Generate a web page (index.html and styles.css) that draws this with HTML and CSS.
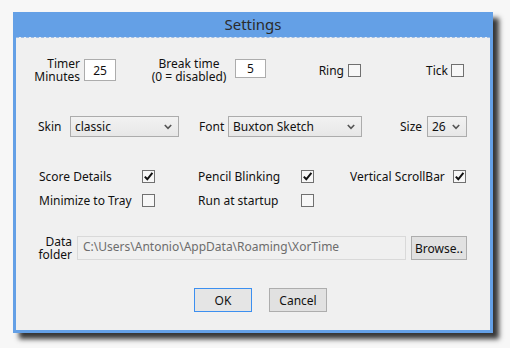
FILE: index.html
```html
<!DOCTYPE html>
<html>
<head>
<meta charset="utf-8">
<link rel="stylesheet" href="styles.css">
</head>
<body>
<div class="window">
  <div class="titlebar">Settings</div>
  <div class="content">
    <div class="row row1">
      <div class="lbl lbl-timer"><div class="ln">Timer</div><div class="ln">Minutes</div></div>
      <div class="field f-timer">25</div>
      <div class="lbl lbl-break"><div class="ln">Break time</div><div class="ln">(0 = disabled)</div></div>
      <div class="field f-break">5</div>
      <div class="lbl lbl-ring">Ring</div>
      <div class="cb cb-ring"></div>
      <div class="lbl lbl-tick">Tick</div>
      <div class="cb cb-tick"></div>
    </div>
    <div class="row row2">
      <div class="lbl lbl-skin">Skin</div>
      <div class="select s-skin"><span>classic</span><svg class="chev" width="8" height="6" viewBox="0 0 8 6"><path d="M0.8 1 L4 4.4 L7.2 1" fill="none" stroke="#555" stroke-width="1.6"/></svg></div>
      <div class="lbl lbl-font">Font</div>
      <div class="select s-font"><span>Buxton Sketch</span><svg class="chev" width="8" height="6" viewBox="0 0 8 6"><path d="M0.8 1 L4 4.4 L7.2 1" fill="none" stroke="#555" stroke-width="1.6"/></svg></div>
      <div class="lbl lbl-size">Size</div>
      <div class="select s-size"><span>26</span><svg class="chev" width="8" height="6" viewBox="0 0 8 6"><path d="M0.8 1 L4 4.4 L7.2 1" fill="none" stroke="#555" stroke-width="1.6"/></svg></div>
    </div>
    <div class="row row3">
      <div class="lbl opt opt1">Score Details</div>
      <div class="cb"><svg width="11" height="11" viewBox="0 0 11 11"><path d="M1.8 5.6 L4.3 8.3 L9.4 1.8" fill="none" stroke="#111" stroke-width="2"/></svg></div>
      <div class="lbl opt opt2">Pencil Blinking</div>
      <div class="cb"><svg width="11" height="11" viewBox="0 0 11 11"><path d="M1.8 5.6 L4.3 8.3 L9.4 1.8" fill="none" stroke="#111" stroke-width="2"/></svg></div>
      <div class="lbl opt opt3">Vertical ScrollBar</div>
      <div class="cb"><svg width="11" height="11" viewBox="0 0 11 11"><path d="M1.8 5.6 L4.3 8.3 L9.4 1.8" fill="none" stroke="#111" stroke-width="2"/></svg></div>
    </div>
    <div class="row row4">
      <div class="lbl opt opt1">Minimize to Tray</div>
      <div class="cb"></div>
      <div class="lbl opt opt2">Run at startup</div>
      <div class="cb"></div>
    </div>
    <div class="row row5">
      <div class="lbl lbl-data"><div class="ln">Data</div><div class="ln">folder</div></div>
      <div class="path">C:\Users\Antonio\AppData\Roaming\XorTime</div>
      <div class="btn btn-browse">Browse..</div>
    </div>
    <div class="row row6">
      <div class="btn btn-ok">OK</div>
      <div class="btn btn-cancel">Cancel</div>
    </div>
  </div>
</div>
</body>
</html>
```
FILE: styles.css
```css
html, body {
  margin: 0;
  padding: 0;
  background: #f7f7f7;
  width: 510px;
  height: 348px;
  overflow: hidden;
}
body {
  font-family: "Noto Sans", "DejaVu Sans", sans-serif;
  font-size: 12px;
  color: #111;
}
.window {
  margin-left: 13px;
  margin-top: 12px;
  width: 480px;
  height: 321px;
  box-sizing: border-box;
  background: #64a0e6;
  border-left: 3px solid #64a0e6;
  border-right: 3px solid #64a0e6;
  border-bottom: 3px solid #64a0e6;
  box-shadow: 6px 6px 5px rgba(0, 0, 0, 0.78);
  display: flex;
  flex-direction: column;
}
.titlebar {
  height: 25px;
  line-height: 24px;
  text-align: center;
  font-size: 15px;
  color: #2b2b2b;
  box-sizing: border-box;
}
.content {
  flex: 1;
  background: #f0f0f0;
  border-top: 1px dashed #9dbde6;
  display: flex;
  flex-direction: column;
}
.row {
  display: flex;
  align-items: center;
}
.lbl {
  line-height: 13px;
  white-space: nowrap;
}
.ln {
  height: 13px;
  line-height: 13px;
}
.row1 { margin-top: 19px; height: 26px; }
.lbl-timer { margin-left: 14px; width: 50px; text-align: right; }
.field {
  background: #fff;
  border: 1px solid #acacac;
  box-sizing: border-box;
  display: flex;
  align-items: center;
  justify-content: center;
}
.f-timer { margin-left: 4px; width: 32px; height: 22px; }
.lbl-break { margin-left: 30px; width: 86px; text-align: center; }
.f-break { margin-left: 3px; width: 31px; height: 19px; align-self: flex-start; margin-top: 2px; }
.lbl-ring { margin-left: 18px; width: 60px; text-align: right; }
.lbl-tick { margin-left: 27px; width: 60px; text-align: right; }
.cb {
  width: 13px;
  height: 13px;
  box-sizing: border-box;
  border: 1px solid #707070;
  background: #f7f7f7;
  display: flex;
  align-items: center;
  justify-content: center;
}
.cb-ring { margin-left: 4px; }
.cb-tick { margin-left: 3px; }

.row2 { margin-top: 33px; height: 21px; }
.lbl-skin { margin-left: 22px; width: 32px; }
.lbl-font { margin-left: 20px; width: 29px; }
.lbl-size { margin-left: 38px; width: 27px; }
.select {
  height: 21px;
  box-sizing: border-box;
  border: 1px solid #acacac;
  background: linear-gradient(#f2f2f2, #e7e7e7);
  display: flex;
  align-items: center;
  justify-content: space-between;
  padding: 0 6px 0 4px;
}
.s-skin { width: 109px; }
.s-font { width: 134px; }
.s-size { width: 40px; }

.row3 { margin-top: 31px; height: 16px; }
.row4 { margin-top: 8px; height: 16px; }
.opt1 { margin-left: 23px; width: 103px; }
.opt2 { margin-left: 43px; width: 103px; }
.opt3 { margin-left: 36px; width: 103px; }

.row5 { margin-top: 28px; height: 24px; }
.lbl-data { margin-left: 22px; width: 34px; text-align: right; }
.path {
  margin-left: 5px;
  width: 329px;
  height: 24px;
  box-sizing: border-box;
  border: 1px solid #d9d9d9;
  background: #f0f0f0;
  color: #6d6d6d;
  padding: 0 0 0 5px;
  line-height: 19px;
  white-space: nowrap;
}
.btn {
  height: 24px;
  box-sizing: border-box;
  border: 1px solid #adadad;
  background: #e1e1e1;
  display: flex;
  align-items: center;
  justify-content: center;
  color: #111;
}
.btn-browse { margin-left: 5px; width: 56px; }
.row6 { margin-top: 28px; }
.btn-ok { margin-left: 178px; width: 58px; border-color: #3c8ff0; background: #e5e5e5; }
.btn-cancel { margin-left: 17px; width: 58px; }
```
